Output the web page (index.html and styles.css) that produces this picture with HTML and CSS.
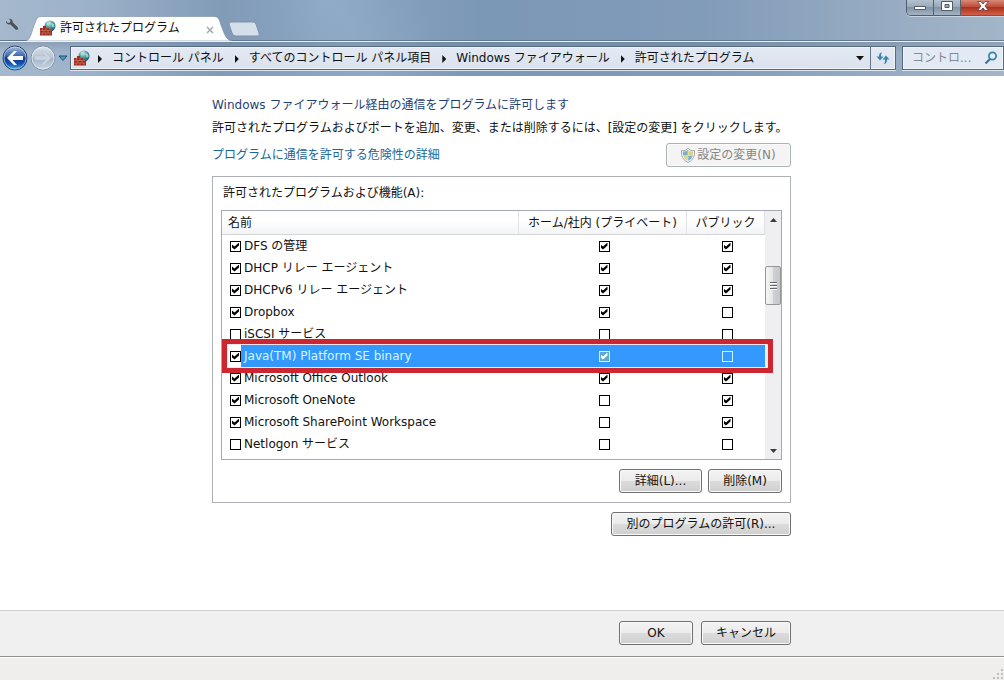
FILE: index.html
```html
<!DOCTYPE html>
<html lang="ja">
<head>
<meta charset="utf-8">
<title>許可されたプログラム</title>
<link rel="stylesheet" href="styles.css">
</head>
<body>
<svg class="defs" aria-hidden="true">
  <defs>
    <radialGradient id="globe" cx="40%" cy="25%" r="75%"><stop offset="0" stop-color="#d5f0e4"/><stop offset="0.5" stop-color="#4b9ca6"/><stop offset="1" stop-color="#1d5675"/></radialGradient>
    <linearGradient id="blue" x2="0" y2="1"><stop offset="0" stop-color="#a9bfdc"/><stop offset="0.42" stop-color="#3d66ad"/><stop offset="0.5" stop-color="#0d3584"/><stop offset="0.75" stop-color="#1557b4"/><stop offset="1" stop-color="#49bdf4"/></linearGradient>
    <linearGradient id="pale" x2="0" y2="1"><stop offset="0" stop-color="#dde4ec"/><stop offset="0.48" stop-color="#b5c3d2"/><stop offset="0.5" stop-color="#9fb1c4"/><stop offset="1" stop-color="#ccd9e6"/></linearGradient>
    <symbol id="firewall" viewBox="0 0 16 16">
      <circle cx="10" cy="6" r="5.5" fill="url(#globe)"/>
      <path d="M7 2.5c2-1 3 0 2 1.500l-2 1zM11 3l3 1 .5 3-2 .5z" fill="#b9dfc4" opacity=".8"/>
      <path d="M0 8h3V6h3v2h3v2h3v5.500H0z" fill="#9c2d20"/>
      <path d="M0 10.500h11M0 13h11M2.500 8v2.500M6 8v2.500M4 10.500V13M8 10.500V13M2.500 13v2.500M6 13v2.500M10 13v2.500" stroke="#dc8a70" stroke-width=".5" fill="none"/>
    </symbol>
  </defs>
</svg>

<header class="chrome">
  <div class="titlebar">
    <button class="wrench" aria-label="ツール"><svg width="14" height="14" viewBox="0 0 14 14"><path d="M1 3l2 2 2-.5L5.500 2.500 4 .8C6 .3 8 1.800 7.700 4.200l5 5c1.300 1.700-.7 3.500-2.200 2.200l-5-5C3.200 7.200.6 5.500 1 3z" fill="#4b5157"/></svg></button>
    <div class="tab">
      <svg class="tab-shape" viewBox="0 0 206 26" preserveAspectRatio="none" aria-hidden="true"><path d="M0 26C4 25 5 19 8 10 11 2 11 .5 16 .5H187c6 0 6 3 8 9 4 11 5 15 11 16.500z" fill="#fdfefe" stroke="#8494a7" stroke-width=".7"/></svg>
      <svg class="app-icon" width="16" height="16"><use href="#firewall"/></svg>
      <span class="tab-title">許可されたプログラム</span>
      <button class="tab-close" aria-label="閉じる"><svg width="8" height="8" viewBox="0 0 8 8"><path d="M1 1l6 6M7 1L1 7" stroke="#a5aaaf" stroke-width="1.500"/></svg></button>
    </div>
    <button class="new-tab" aria-label="新しいタブ"><svg width="32" height="16" viewBox="0 0 32 16"><path d="M3 1h22q2 0 3 2l3 9q1 3-1 3H8q-3 0-4-3L1 3q0-2 2-2z" fill="#d4dfea" stroke="#8193a8"/></svg></button>
    <div class="window-buttons">
      <button aria-label="最小化"><svg width="12" height="6" viewBox="0 0 12 6"><path d="M.5 1.500h11v3H.5z" fill="#fff" stroke="#515b66"/></svg></button>
      <button aria-label="最大化"><svg width="12" height="11" viewBox="0 0 12 11"><path fill-rule="evenodd" d="M.5.500h11v9H.5zM4 3.500v3h4v-3z" fill="#fff" stroke="#515b66"/></svg></button>
      <button class="close" aria-label="ウィンドウを閉じる"><svg width="12" height="11" viewBox="0 0 12 11"><path d="M.5.500h3.500l2 2.500 2-2.500h3.500L8 5l3.500 4.500H8L6 7 4 9.500H.5L4 5z" fill="#fff" stroke="#6b3433" stroke-width=".8"/></svg></button>
    </div>
  </div>
  <nav class="navbar" aria-label="アドレス">
    <button class="back" aria-label="戻る"><svg width="26" height="26" viewBox="0 0 26 26"><circle cx="13" cy="13" r="12" fill="url(#blue)" stroke="#243f6d"/><circle cx="13" cy="13" r="11" fill="none" stroke="#d9e9f8" stroke-opacity=".6"/><path d="M5 13l7-7h3l-4.500 5H21v4H10.500L15 20h-3z" fill="#fff"/></svg></button>
    <button class="forward" aria-label="進む"><svg width="26" height="26" viewBox="0 0 26 26"><circle cx="13" cy="13" r="12" fill="url(#pale)" stroke="#8193a7"/><circle cx="13" cy="13" r="11" fill="none" stroke="#eef4f9" stroke-opacity=".7"/><path d="M21 13l-7-7h-3l4.500 5H5v4h10.500L11 20h3z" fill="#cad5e0" stroke="#b4c1cf" stroke-width=".5"/></svg></button>
    <button class="history" aria-label="履歴"><svg width="10" height="7" viewBox="0 0 10 7"><path d="M1 1h8L5 5.500z" fill="#4d99c5" stroke="#1f4d79"/></svg></button>
    <div class="address">
      <svg class="app-icon" width="16" height="16"><use href="#firewall"/></svg>
      <ol class="crumbs">
        <li><a href="#">コントロール パネル</a></li>
        <li><a href="#">すべてのコントロール パネル項目</a></li>
        <li><a href="#">Windows ファイアウォール</a></li>
        <li><a href="#">許可されたプログラム</a></li>
      </ol>
      <button class="drop" aria-label="以前の場所"><svg width="8" height="5" viewBox="0 0 8 5"><path d="M0 0h8L4 4.500z" fill="#111"/></svg></button>
      <button class="refresh" aria-label="更新"><svg width="14" height="14" viewBox="0 0 14 14"><path d="M6 1.500C3.500 1.500 3 3.500 3 5.500H.5L4 9.500 7.500 5.500H5C5 4 5 3 6 1.500zM8 13c2.500 0 3-2.500 3-4.500h2.500L10 4.500 6.500 8.500H9C9 10.500 9 11.500 8 13z" fill="#3e84a9"/></svg></button>
    </div>
    <div class="search">
      <input type="text" placeholder="コントロ..." aria-label="コントロール パネルの検索">
      <svg width="14" height="14" viewBox="0 0 14 14"><circle cx="8.500" cy="5" r="3.600" fill="#e5f1f8" stroke="#3a83ad" stroke-width="1.800"/><path d="M6 8l-4.500 4.500" stroke="#3a7298" stroke-width="2.200"/></svg>
    </div>
  </nav>
</header>

<main class="content">
  <div class="column">
    <h1>Windows ファイアウォール経由の通信をプログラムに許可します</h1>
    <p class="lead">許可されたプログラムおよびポートを追加、変更、または削除するには、[設定の変更] をクリックします。</p>
    <div class="link-row">
      <a href="#">プログラムに通信を許可する危険性の詳細</a>
      <button class="btn change" disabled><svg width="14" height="15" viewBox="0 0 14 15"><path d="M7 .500l2 1.500q2 1 4.500.500Q14.500 11 7 14.500-.5 11 .5 2.500 3 3 5 2z" fill="#fff" stroke="#9fa9ac"/><path d="M6.800 2v5.500H2L1.700 3.500Q5 3.500 6.800 2zM7.200 7.500H12Q11 11 7.200 13z" fill="#7faecb"/><path d="M7.200 2Q9 3.500 12.300 3.500L12 7.500H7.200zM6.800 7.500V13Q3 11 2 7.500z" fill="#d7d48a"/></svg>設定の変更(N)</button>
    </div>

    <section class="group">
      <h2 id="list-label">許可されたプログラムおよび機能(A):</h2>
      <div class="list">
        <table aria-labelledby="list-label">
          <colgroup><col><col class="c-home"><col class="c-public"></colgroup>
          <thead><tr><th>名前</th><th>ホーム/社内 (プライベート)</th><th>パブリック</th></tr></thead>
          <tbody>
            <tr><td><label><input type="checkbox" checked><span>DFS の管理</span></label></td><td><input type="checkbox" checked aria-label="DFS の管理 ホーム/社内"></td><td><input type="checkbox" checked aria-label="DFS の管理 パブリック"></td></tr>
            <tr><td><label><input type="checkbox" checked><span>DHCP リレー エージェント</span></label></td><td><input type="checkbox" checked aria-label="DHCP ホーム/社内"></td><td><input type="checkbox" checked aria-label="DHCP パブリック"></td></tr>
            <tr><td><label><input type="checkbox" checked><span>DHCPv6 リレー エージェント</span></label></td><td><input type="checkbox" checked aria-label="DHCPv6 ホーム/社内"></td><td><input type="checkbox" checked aria-label="DHCPv6 パブリック"></td></tr>
            <tr><td><label><input type="checkbox" checked><span>Dropbox</span></label></td><td><input type="checkbox" checked aria-label="Dropbox ホーム/社内"></td><td><input type="checkbox" aria-label="Dropbox パブリック"></td></tr>
            <tr><td><label><input type="checkbox"><span>iSCSI サービス</span></label></td><td><input type="checkbox" aria-label="iSCSI ホーム/社内"></td><td><input type="checkbox" aria-label="iSCSI パブリック"></td></tr>
            <tr class="selected"><td><label><input type="checkbox" checked><span>Java(TM) Platform SE binary</span></label></td><td><input type="checkbox" checked aria-label="Java ホーム/社内"></td><td><input type="checkbox" aria-label="Java パブリック"></td></tr>
            <tr><td><label><input type="checkbox" checked><span>Microsoft Office Outlook</span></label></td><td><input type="checkbox" checked aria-label="Outlook ホーム/社内"></td><td><input type="checkbox" checked aria-label="Outlook パブリック"></td></tr>
            <tr><td><label><input type="checkbox" checked><span>Microsoft OneNote</span></label></td><td><input type="checkbox" aria-label="OneNote ホーム/社内"></td><td><input type="checkbox" checked aria-label="OneNote パブリック"></td></tr>
            <tr><td><label><input type="checkbox" checked><span>Microsoft SharePoint Workspace</span></label></td><td><input type="checkbox" aria-label="SharePoint ホーム/社内"></td><td><input type="checkbox" checked aria-label="SharePoint パブリック"></td></tr>
            <tr><td><label><input type="checkbox"><span>Netlogon サービス</span></label></td><td><input type="checkbox" aria-label="Netlogon ホーム/社内"></td><td><input type="checkbox" aria-label="Netlogon パブリック"></td></tr>
          </tbody>
        </table>
        <div class="scrollbar" aria-hidden="true">
          <svg width="7" height="4" viewBox="0 0 7 4"><path d="M0 4h7L3.500 0z" fill="#3c3c3c"/></svg>
          <div class="track"><div class="thumb"><svg width="7" height="8" viewBox="0 0 7 8"><path d="M0 .500h7M0 3.500h7M0 6.500h7" stroke="#666"/><path d="M0 1.500h7M0 4.500h7M0 7.500h7" stroke="#fff"/></svg></div></div>
          <svg width="7" height="4" viewBox="0 0 7 4"><path d="M0 0h7L3.500 4z" fill="#3c3c3c"/></svg>
        </div>
      </div>
      <div class="actions">
        <button class="btn details">詳細(L)...</button>
        <button class="btn small">削除(M)</button>
      </div>
    </section>
    <div class="another"><button class="btn allow">別のプログラムの許可(R)...</button></div>
  </div>
</main>

<footer class="commit">
  <div class="column commit-row">
    <button class="btn small">OK</button>
    <button class="btn cancel">キャンセル</button>
  </div>
</footer>
<div class="status"><svg width="11" height="11" viewBox="0 0 11 11" aria-hidden="true"><path d="M8 0h2v2H8zM4 4h2v2H4zM8 4h2v2H8zM0 8h2v2H0zM4 8h2v2H4zM8 8h2v2H8z" fill="#c3bfc0"/></svg></div>
</body>
</html>
```
FILE: styles.css
```css
* { box-sizing: border-box; }

body {
  margin: 0;
  min-height: 100vh;
  display: flex;
  flex-direction: column;
  background: #fff;
  color: #111;
  font: 12px/18px "DejaVu Sans", "Noto Sans CJK JP", sans-serif;
}

button, input { font: inherit; color: inherit; }

button {
  padding: 0;
  border: 0;
  background: none;
  display: flex;
  align-items: center;
  justify-content: center;
}

a { color: inherit; text-decoration: none; }
svg { display: block; flex: none; }
.defs { position: absolute; width: 0; height: 0; }

/* Window frame */
.chrome {
  background:
    linear-gradient(60deg, transparent 30%, rgba(160, 185, 212, 0.3) 36%, transparent 44%),
    linear-gradient(90deg, #a5b8cc 0%, #9db3cb 8%, #819bb7 22%, #8aa5c2 32%, #7c98b7 48%, #819bb9 70%, #93a9c1 85%, #a3b5c8 100%);
}

.titlebar {
  display: flex;
  align-items: flex-end;
  height: 41px;
  border-bottom: 1px solid #64788e;
}

.wrench { align-self: flex-start; margin: 18px 0 0 5px; }

.tab {
  position: relative;
  display: flex;
  align-items: center;
  width: 206px;
  height: 24px;
  margin-left: 7px;
  padding: 0 18px 0 14px;
}

.tab-shape { position: absolute; left: 0; bottom: -1px; width: 100%; height: 25px; }
.tab .app-icon, .tab-title, .tab-close { position: relative; }
.tab-title { margin-left: 4px; flex: 1; }
.tab-close { margin-top: 4px; }
.new-tab { align-self: flex-start; margin: 21px 0 0 -4px; }

.window-buttons {
  display: flex;
  align-self: flex-start;
  margin-left: auto;
  height: 16px;
  border: 1px solid #505f70;
  border-width: 0 0 1px 1px;
  border-radius: 0 0 0 5px;
  overflow: hidden;
  box-shadow: 0 1px 0 #c9d7e5;
}

.window-buttons button {
  width: 27px;
  padding-bottom: 3px;
  border-right: 1px solid #536170;
  background: linear-gradient(#b4c1cf, #9aaaba 45%, #7e90a2 46%, #a5b4c3);
}

.window-buttons button:first-child { padding-bottom: 0; }

.window-buttons .close {
  width: 43px;
  padding-right: 0;
  border: 0;
  background: linear-gradient(#d78b79, #bf4d38 45%, #a62f1c 46%, #d55e46);
}

.navbar {
  display: flex;
  align-items: center;
  height: 35px;
  padding: 1px 0 3px 2px;
  border-top: 1px solid #e9f1f7;
  background: linear-gradient(rgba(75, 96, 120, 0.25), transparent 30%);
}

.forward { margin-left: 2px; }
.history { margin: 0 2px; }

.address {
  display: flex;
  align-items: stretch;
  flex: 1;
  min-width: 0;
  height: 24px;
  border: 1px solid #55697f;
  background: linear-gradient(#e4eaf3, #dae2ee);
  box-shadow: inset 0 0 0 1px #eff4f9, 0 1px 0 #dbe6f0;
}

.address > .app-icon { align-self: center; margin-left: 3px; }

.crumbs {
  display: flex;
  align-items: center;
  flex: 1;
  margin: 0;
  padding: 0;
  list-style: none;
  white-space: nowrap;
}

.crumbs li { display: flex; align-items: center; }

.crumbs li::before {
  content: "";
  width: 4px;
  height: 8px;
  margin: 2px 10px 0 8px;
  background: #111;
  clip-path: polygon(0 0, 100% 50%, 0 100%);
}

.crumbs li + li::before { margin-left: 11px; }

.drop { width: 20px; }
.refresh { width: 25px; border-left: 1px solid #66798d; }

.search {
  display: flex;
  align-items: center;
  width: 102px;
  height: 24px;
  margin-left: 6px;
  padding: 0 5px 0 9px;
  border: 1px solid #55697f;
  background: #e4eaf3;
  box-shadow: inset 0 0 0 1px #eff4f9, 0 1px 0 #dbe6f0;
}

.search input {
  flex: 1;
  min-width: 0;
  padding: 0;
  border: 0;
  outline: 0;
  background: none;
}

.search input::placeholder { color: #858a91; opacity: 1; }

/* Page */
.content { flex: 1; padding-top: 20px; }
.column { width: 100%; max-width: 580px; margin: 0 auto; padding-right: 1px; }

h1, h2 { margin: 0; font-size: 12px; font-weight: normal; }
h1 { color: #1f3f77; }
.lead { margin: 5px 0 6px; white-space: nowrap; }

.link-row {
  display: flex;
  align-items: center;
  justify-content: space-between;
  margin-bottom: 9px;
}

.link-row a { color: #1a6699; }

.btn {
  height: 24px;
  border: 1px solid #707070;
  border-radius: 3px;
  background: linear-gradient(#f3f3f3, #ebebeb 48%, #dcdcdc 50%, #cfcfcf);
  box-shadow: inset 0 0 0 1px #fafafa;
  white-space: nowrap;
}

.btn:disabled {
  border-color: #adb2b5;
  background: #f4f4f4;
  color: #858585;
}

.change { width: 125px; gap: 2px; }
.details { width: 83px; }
.small { width: 74px; }
.cancel { width: 90px; }
.allow { width: 180px; }

.group { padding: 7px 8px 9px; border: 1px solid #adb0b5; }
.group h2 { margin: 0 2px 8px; }

.list {
  display: flex;
  border: 1px solid #a5a9b5;
}

.list table {
  flex: 1;
  table-layout: fixed;
  border-collapse: separate;
  border-spacing: 0;
  align-self: flex-start;
}

.c-home { width: 168px; }
.c-public { width: 78px; }

th {
  height: 24px;
  padding: 0;
  border-right: 1px solid #dfe2e6;
  border-bottom: 1px solid #d5d5d5;
  background: linear-gradient(#fff 40%, #f3f4f6);
  font-weight: normal;
  white-space: nowrap;
}

th:first-child { padding-left: 6px; text-align: left; }

td { height: 22px; padding: 0; text-align: center; }
td:first-child { padding-left: 8px; }
td:not(:first-child) { padding-left: 2px; }

td label { display: flex; align-items: center; text-align: left; }
td label span { flex: 1; padding-left: 3px; line-height: 22px; }

input[type="checkbox"] {
  appearance: none;
  flex: none;
  width: 11px;
  height: 11px;
  margin: 0;
  border: 1px solid #000;
  background: #fff;
}

td > input[type="checkbox"] { display: block; margin: 0 auto; }

input[type="checkbox"]:checked::before {
  content: "";
  display: block;
  width: 7px;
  height: 7px;
  margin: 1px;
  background: #000;
  clip-path: polygon(0 29%, 36% 57%, 100% 0, 100% 43%, 36% 100%, 0 72%);
}

.selected { position: relative; }
.selected td:not(:first-child), .selected label span { background: #3399ff; color: #d5f6ff; }
.selected td > input[type="checkbox"] { border-color: #c9f5ed; background: #3399ff; }
.selected td > input[type="checkbox"]:checked { background: #5fa9cf; }
.selected td > input[type="checkbox"]:checked::before { background: #fff; }

/* Red frame drawn around the selected entry */
.selected::after {
  content: "";
  position: absolute;
  inset: -6px -8px -6px 0;
  border: 5px solid #cc2730;
  box-shadow: inset 0 0 0 1px #f7e5f0;
  pointer-events: none;
}

.scrollbar {
  display: flex;
  flex-direction: column;
  align-items: center;
  width: 16px;
  min-height: 248px;
  padding: 7px 0 6px;
  background: #efeff1;
}

.track { flex: 1; width: 100%; padding: 44px 0 0; }

.thumb {
  display: flex;
  align-items: center;
  justify-content: center;
  height: 39px;
  border: 1px solid #979797;
  border-radius: 2px;
  background: linear-gradient(90deg, #f6f6f6, #e4e4e6 48%, #d0d1d5 50%, #c3c5ca);
}

.actions { display: flex; justify-content: flex-end; gap: 6px; margin-top: 9px; }
.another { display: flex; justify-content: flex-end; margin: 9px 0; }

.commit {
  padding: 10px 0 11px;
  border-top: 1px solid #cfcfcf;
  border-bottom: 1px solid #909090;
  background: #f0f0f0;
}

.commit-row { display: flex; justify-content: flex-end; gap: 8px; }

.status {
  display: flex;
  align-items: flex-end;
  justify-content: flex-end;
  height: 23px;
  border-top: 1px solid #fff;
  background: #f0eded;
}
```
